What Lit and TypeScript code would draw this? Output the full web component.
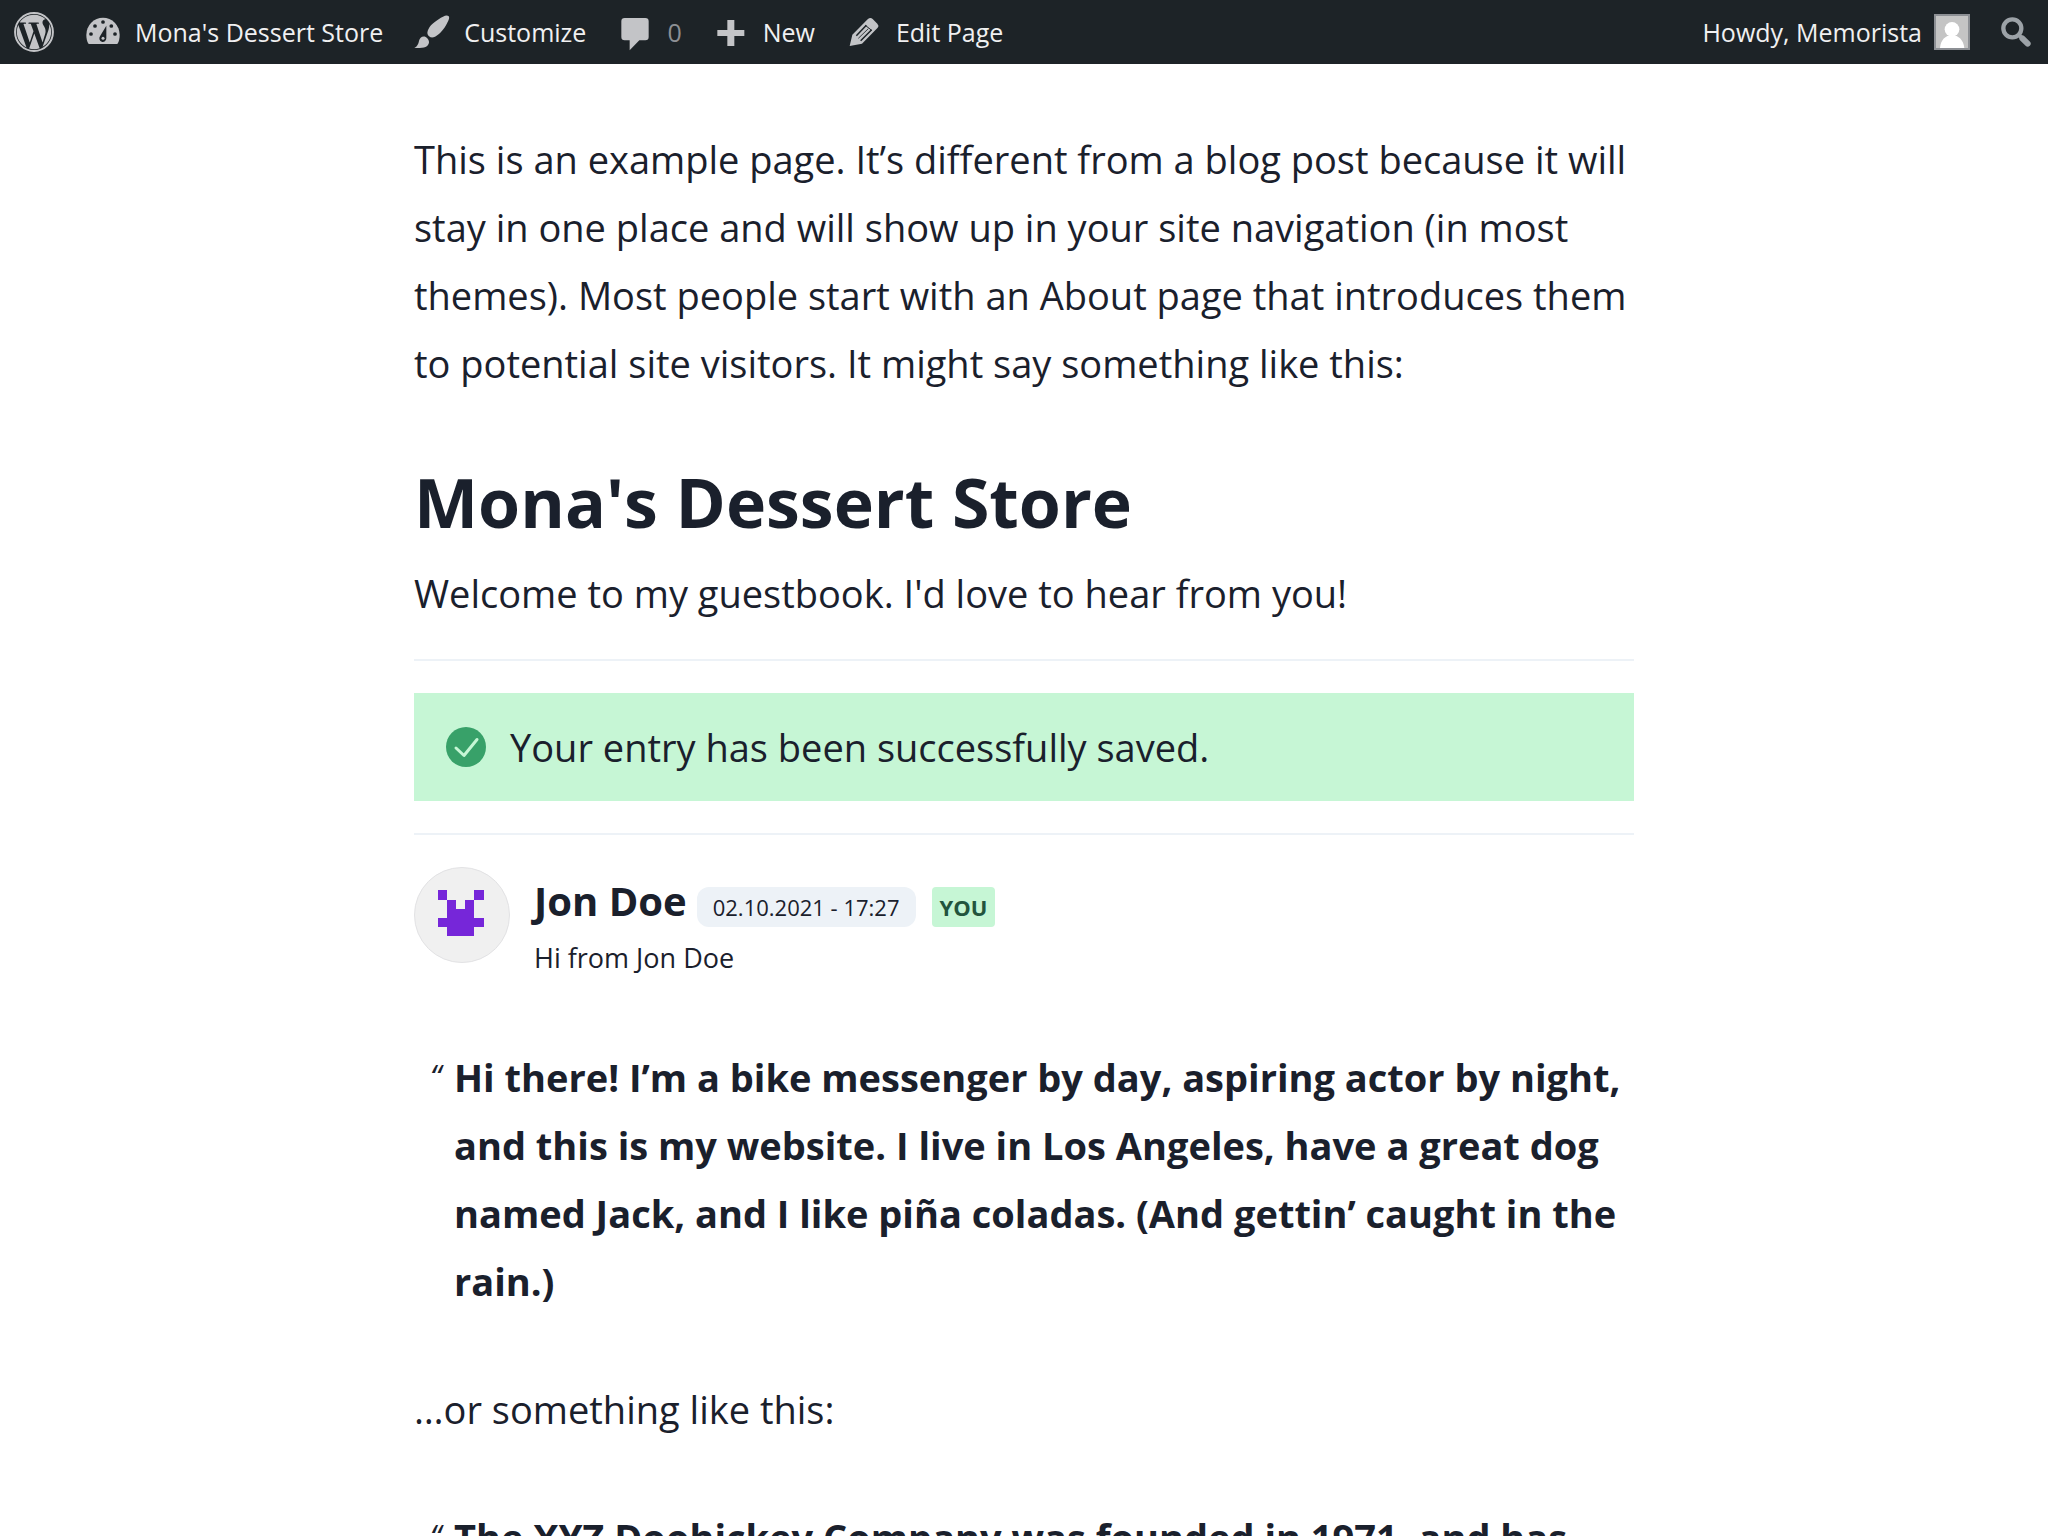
import { LitElement, html, css, svg } from "lit";
import { customElement } from "lit/decorators.js";

const wordpressIcon = html`<svg class="icon" viewBox="0 0 122.52 122.52" aria-hidden="true">
  <circle cx="61.26" cy="61.26" r="58" fill="none" stroke="currentColor" stroke-width="6" />
  <path fill="currentColor" d="M8.708 61.26c0 20.802 12.089 38.779 29.619 47.298L13.258 39.872c-2.916 6.536-4.55 13.769-4.55 21.388z" />
  <path fill="currentColor" d="M96.74 58.608c0-6.495-2.333-10.993-4.334-14.494-2.664-4.329-5.161-7.995-5.161-12.324 0-4.831 3.664-9.328 8.825-9.328.233 0 .454.029.681.042-9.35-8.566-21.807-13.796-35.489-13.796-18.36 0-34.513 9.42-43.91 23.688 1.233.037 2.395.063 3.382.063 5.497 0 14.006-.667 14.006-.667 2.833-.167 3.167 3.994.337 4.329 0 0-2.847.335-6.015.501L48.2 93.547l11.501-34.493-8.188-22.434c-2.83-.166-5.511-.501-5.511-.501-2.832-.166-2.5-4.496.332-4.329 0 0 8.679.667 13.843.667 5.496 0 14.006-.667 14.006-.667 2.835-.167 3.168 3.994.337 4.329 0 0-2.853.335-6.015.501l18.992 56.494 5.242-17.517c2.272-7.269 4.001-12.49 4.001-16.989z" />
  <path fill="currentColor" d="M62.184 65.857l-15.768 45.819c4.708 1.384 9.687 2.141 14.846 2.141 6.12 0 11.989-1.058 17.452-2.979-.141-.225-.269-.464-.374-.724L62.184 65.857z" />
  <path fill="currentColor" d="M107.376 36.046c.226 1.674.354 3.471.354 5.404 0 5.333-.996 11.328-3.996 18.824l-16.053 46.413c15.624-9.111 26.133-26.038 26.133-45.426.001-9.137-2.333-17.729-6.438-25.215z" />
</svg>`;

const dashboardIcon = html`<svg class="icon" viewBox="0 0 120 120" aria-hidden="true">
  <path fill="currentColor" d="M17 96C12 89 10 80 10 68A50 51 0 0 1 110 68C110 80 108 89 103 96Z" />
  <g fill="#1d2327">
    <circle cx="24" cy="66" r="5.6" />
    <circle cx="36" cy="42" r="5.6" />
    <circle cx="60" cy="30" r="5.6" />
    <circle cx="85" cy="42" r="5.6" />
    <circle cx="96" cy="66" r="5.6" />
    <path d="M70 41L70 79A10.500 10.500 0 1 1 51 73Z" />
  </g>
  <circle cx="60" cy="79" r="4.500" fill="currentColor" />
</svg>`;

const brushIcon = html`<svg class="icon" viewBox="57 36 120 120" aria-hidden="true">
  <path fill="currentColor" d="M167 49C171 53 166 64 159 76C150 92 137 106 122 112C113 114 104 109 103 99C105 82 119 69 137 58C149 50 161 43 167 49Z" />
  <path fill="currentColor" d="M98 111C104 115 109 121 108 128C105 141 93 145 64 144C73 139 76 133 78 123C80 114 88 107 98 111Z" />
</svg>`;

const commentIcon = html`<svg class="icon" viewBox="660 36 120 120" aria-hidden="true">
  <path fill="currentColor" d="M689 54H751Q761 54 761 64V111Q761 121 751 121H733L704 151V121H689Q679 121 679 111V64Q679 54 689 54Z" />
</svg>`;

const plusIcon = html`<svg class="icon" viewBox="54 36 120 120" aria-hidden="true">
  <path fill="currentColor" d="M103 60H124V90H154V108H124V138H103V108H73V90H103Z" />
</svg>`;

const pencilIcon = html`<svg class="icon" viewBox="451 36 120 120" aria-hidden="true">
  <path fill="currentColor" d="M522 58Q530 50 537 57L551 71Q557 77 552 83L505 131L468 138L476 104Z" />
  <path fill="none" stroke="#1d2327" stroke-width="4.500" d="M518 76L488 107M534 89L501 122" />
  <path fill="none" stroke="#1d2327" stroke-width="3" d="M515 76L534 91" />
  <path fill="none" stroke="#1d2327" stroke-width="2.500" d="M524 86L494 115" />
</svg>`;

const searchIcon = html`<svg class="icon" viewBox="918 36 120 120" aria-hidden="true">
  <circle cx="967" cy="85" r="27" fill="none" stroke="currentColor" stroke-width="13" />
  <path stroke="currentColor" stroke-width="11" d="M984 102L998 116" />
  <path stroke="currentColor" stroke-width="18" stroke-linecap="round" d="M997 115L1013 131" />
</svg>`;

const personIcon = html`<svg class="photo" viewBox="0 0 108 108" role="img" aria-label="Memorista">
  <rect width="108" height="108" fill="#8c8f94" />
  <rect x="6" y="6" width="96" height="96" fill="#c4c4c4" />
  <circle cx="54" cy="46" r="22" fill="#fff" />
  <path fill="#fff" d="M18 102C20 78 34 64 54 64S88 78 91 102Z" />
</svg>`;

const successIcon = html`<svg class="icon" viewBox="0 0 40 40" aria-hidden="true">
  <circle cx="20" cy="20" r="20" fill="#38a169" />
  <path fill="none" stroke="#c6f6d5" stroke-width="3" stroke-linecap="round" stroke-linejoin="round" d="M10 21L18 28.500L31 12.500" />
</svg>`;

const identicon = ["X...X", ".X.X.", ".XXX.", "XXXXX", ".XXX."];

@customElement("admin-bar")
export class AdminBar extends LitElement {
  static styles = css`
    :host {
      display: block;
      flex: none;
      background: #1d2327;
      color: #f0f0f1;
      font: 25px/32px "Open Sans", "Noto Sans", sans-serif;
    }
    .bar {
      display: flex;
      align-items: center;
      justify-content: space-between;
      height: 64px;
      padding: 0 12px 0 14px;
    }
    .group {
      display: flex;
      align-items: center;
      gap: 29px;
    }
    .account {
      gap: 26px;
    }
    .item {
      display: flex;
      align-items: center;
      gap: 12px;
      color: inherit;
      text-decoration: none;
      white-space: nowrap;
    }
    .icon {
      display: block;
      width: 40px;
      height: 40px;
      color: #c3c4c7;
    }
    .photo {
      display: block;
      width: 36px;
      height: 36px;
    }
    .count {
      color: #8c8f94;
    }
    .search {
      padding: 0;
      border: 0;
      background: none;
    }
    .search .icon {
      color: #9ca2a7;
    }
  `;

  render() {
    return html`<nav class="bar" aria-label="Toolbar">
      <div class="group">
        <a class="item" href="#" aria-label="About WordPress">${wordpressIcon}</a>
        <a class="item" href="#">${dashboardIcon}<span>Mona's Dessert Store</span></a>
        <a class="item" href="#">${brushIcon}<span>Customize</span></a>
        <a class="item" href="#">${commentIcon}<span class="count">0</span></a>
        <a class="item" href="#">${plusIcon}<span>New</span></a>
        <a class="item" href="#">${pencilIcon}<span>Edit Page</span></a>
      </div>
      <div class="group account">
        <a class="item" href="#"><span>Howdy, Memorista</span>${personIcon}</a>
        <button class="search" type="button" aria-label="Search">${searchIcon}</button>
      </div>
    </nav>`;
  }
}

@customElement("guest-entry")
export class GuestEntry extends LitElement {
  static styles = css`
    :host {
      display: block;
    }
    .entry {
      display: flex;
      align-items: flex-start;
      gap: 24px;
    }
    .avatar {
      flex: none;
      width: 96px;
      height: 96px;
    }
    .head {
      display: flex;
      align-items: center;
      line-height: 68px;
    }
    .name {
      margin: 0 10px 0 0;
      font-size: 40px;
      font-weight: 700;
    }
    .date,
    .you {
      margin-top: 12px;
      font-size: 22px;
      line-height: 40px;
    }
    .date {
      padding: 0 16px;
      border-radius: 12px;
      background: #edf2f7;
      font-weight: 500;
    }
    .you {
      margin-left: 16px;
      padding: 0 8px;
      border-radius: 4px;
      background: #c6f6d5;
      color: #22543d;
      font-weight: 700;
    }
    .message {
      margin: 0;
      font-size: 27px;
      line-height: 46px;
    }
  `;

  render() {
    return html`<article class="entry">
      <svg class="avatar" viewBox="0 0 96 96" aria-hidden="true">
        <circle cx="48" cy="48" r="47.5" fill="#f0f0f0" stroke="#e2e2e4" />
        <g fill="#7626d9" shape-rendering="crispEdges">
          ${identicon.flatMap((row, y) =>
            [...row].map((cell, x) =>
              cell === "X"
                ? svg`<rect x=${23.5 + x * 9.2} y=${23.3 + y * 9.2} width="9.3" height="9.3" />`
                : null
            )
          )}
        </g>
      </svg>
      <div>
        <header class="head">
          <h3 class="name">Jon Doe</h3>
          <time class="date" datetime="2021-10-02T17:27">02.10.2021 - 17:27</time>
          <span class="you">YOU</span>
        </header>
        <p class="message">Hi from Jon Doe</p>
      </div>
    </article>`;
  }
}

@customElement("app-root")
export class AppRoot extends LitElement {
  static styles = css`
    :host {
      display: flex;
      flex-direction: column;
      height: 100vh;
      overflow: hidden;
      background: #fff;
      color: #1a202c;
      font: 38px/68px "Open Sans", "Noto Sans", sans-serif;
    }
    .page {
      box-sizing: border-box;
      width: 100%;
      max-width: 1220px;
      margin: 0 auto;
      padding-top: 61px;
    }
    .text {
      margin: 0 0 60px;
    }
    .title {
      margin: 0 0 12px;
      font-size: 68px;
      line-height: 90px;
      font-weight: 700;
    }
    .welcome {
      margin: 0;
    }
    .rule {
      height: 2px;
      margin: 32px 0;
      border: 0;
      background: #edf2f7;
    }
    .alert {
      display: flex;
      align-items: center;
      gap: 24px;
      padding: 20px 32px;
      background: #c6f6d5;
    }
    .alert .icon {
      flex: none;
      width: 40px;
      height: 40px;
    }
    .entries {
      margin-bottom: 62px;
    }
    .quote {
      display: flex;
      margin: 0 0 60px;
      font-weight: 700;
    }
    .mark {
      flex: none;
      box-sizing: border-box;
      width: 40px;
      padding-left: 16px;
      font-size: 32px;
      font-style: italic;
      font-weight: 400;
    }
    .said {
      margin: 0;
    }
  `;

  render() {
    return html`
      <admin-bar></admin-bar>
      <main class="page">
        <p class="text">
          This is an example page. It’s different from a blog post because it will stay in one place and will show up in
          your site navigation (in most themes). Most people start with an About page that introduces them to potential
          site visitors. It might say something like this:
        </p>
        <h2 class="title">Mona's Dessert Store</h2>
        <p class="welcome">Welcome to my guestbook. I'd love to hear from you!</p>
        <hr class="rule" />
        <div class="alert" role="status">${successIcon}<span>Your entry has been successfully saved.</span></div>
        <hr class="rule" />
        <guest-entry class="entries"></guest-entry>
        <blockquote class="quote">
          <span class="mark" aria-hidden="true">“</span>
          <p class="said">
            Hi there! I’m a bike messenger by day, aspiring actor by night, and this is my website. I live in Los
            Angeles, have a great dog named Jack, and I like piña coladas. (And gettin’ caught in the rain.)
          </p>
        </blockquote>
        <p class="text">…or something like this:</p>
        <blockquote class="quote">
          <span class="mark" aria-hidden="true">“</span>
          <p class="said">The XYZ Doohickey Company was founded in 1971, and has</p>
        </blockquote>
      </main>
    `;
  }
}
